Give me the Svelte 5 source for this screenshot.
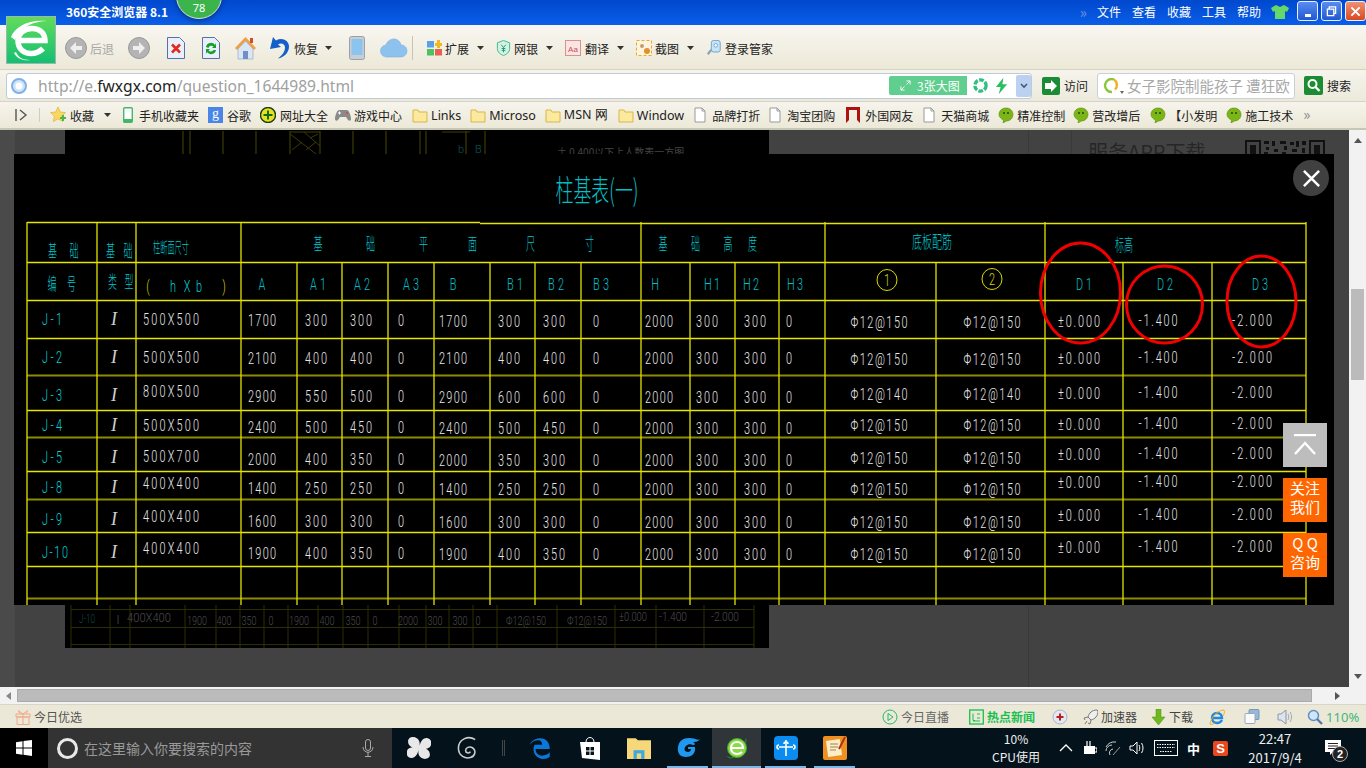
<script>
  const rows = [
    ['J-1', '500X500', [1700, 300, 300, 0], [1700, 300, 300, 0], 'Φ12@150'],
    ['J-2', '500X500', [2100, 400, 400, 0], [2100, 400, 400, 0], 'Φ12@150'],
    ['J-3', '800X500', [2900, 550, 500, 0], [2900, 600, 600, 0], 'Φ12@140'],
    ['J-4', '500X500', [2400, 500, 450, 0], [2400, 500, 450, 0], 'Φ12@150'],
    ['J-5', '500X700', [2000, 400, 350, 0], [2000, 350, 300, 0], 'Φ12@150'],
    ['J-8', '400X400', [1400, 250, 250, 0], [1400, 250, 250, 0], 'Φ12@150'],
    ['J-9', '400X400', [1600, 300, 300, 0], [1600, 300, 300, 0], 'Φ12@150'],
    ['J-10', '400X400', [1900, 400, 350, 0], [1900, 400, 350, 0], 'Φ12@150']
  ];
  // text in the drawing sits a little off the row centre, and differently per column group
  const yLabel = [319, 357, 395, 425, 457, 487, 519, 552];
  const ySize = [319, 357, 391, 425, 456, 483, 516, 548];
  const yA = [320, 358, 396, 427, 459, 488, 521, 553];
  const yB = [321, 358, 397, 428, 460, 489, 522, 554];
  const yPhi = [322, 359, 394, 425, 458, 489, 522, 554];
  const yD = [321, 358, 393, 424, 454, 482, 515, 547];

  const xA = [262, 316, 361, 401];
  const xB = [453, 509, 554, 596];
  const xH = [659, 707, 755, 789];

  // CAD lettering is narrow and loosely spaced: glyphs are squeezed, then spread out
  const squeeze = 0.64;

  const numWidth = (v) => (v === 0 ? 6 : String(v).length === 4 ? 28 : 22);

  const values = rows.flatMap((r, i) => [
    ...r[2].map((v, j) => ({ x: xA[j], y: yA[i], t: v, w: numWidth(v) })),
    ...r[3].map((v, j) => ({ x: xB[j], y: yB[i], t: v, w: numWidth(v) })),
    ...[2000, 300, 300, 0].map((v, j) => ({ x: xH[j], y: yB[i], t: v, w: numWidth(v) })),
    { x: 171, y: ySize[i], t: r[1], w: 56 },
    { x: 879, y: yPhi[i], t: r[4], w: 57 },
    { x: 992, y: yPhi[i], t: r[4], w: 57 },
    { x: 1079, y: yD[i], t: '±0.000', w: 42 },
    { x: 1158, y: yD[i] - 1, t: '-1.400', w: 39 },
    { x: 1252, y: yD[i] - 1, t: '-2.000', w: 40 }
  ]);

  const hLines = [
    [27, 480, 222.5, 1],
    [480, 1306, 223.5, 1],
    [27, 1306, 262.5, 1],
    [27, 1306, 300.5, 1],
    [27, 1306, 338.5, 1],
    [27, 1306, 375.5, 0],
    [27, 1306, 410.5, 1],
    [27, 1306, 437.5, 0],
    [27, 1306, 471.5, 1],
    [27, 1306, 499.5, 0],
    [27, 1306, 532.5, 1],
    [27, 1306, 566.5, 1],
    [27, 1306, 598.5, 0]
  ];
  const tallCols = [27, 97, 136, 241, 641, 825, 1045, 1306];
  const shortCols = [297, 342, 388, 434, 490, 535, 581, 690, 735, 779, 936, 1123, 1212];

  const heads = [
    ['基', 52.5, 250], ['础', 74, 250], ['基', 110.5, 250], ['础', 128, 250],
    ['编', 52, 283], ['号', 71.5, 283], ['类', 112.5, 281], ['型', 129, 281],
    ['基', 318, 243], ['础', 370.5, 243], ['平', 423.5, 243], ['面', 472.5, 243], ['尺', 530.5, 243], ['寸', 589.5, 243],
    ['基', 663, 243], ['础', 695.5, 243], ['高', 728, 243], ['度', 752.5, 243]
  ];
  const codes = [
    ['A', 262], ['A1', 318], ['A2', 362], ['A3', 411], ['B', 453], ['B1', 515], ['B2', 556], ['B3', 601],
    ['H', 655], ['H1', 712], ['H2', 751], ['H3', 795], ['D1', 1084], ['D2', 1165], ['D3', 1260]
  ];

  // the dimmed drawing of the page behind the lightbox
  const dimCols = [71, 110, 130, 185, 216, 240, 264, 288, 318, 343, 368, 399, 426, 449, 473, 497, 557, 615, 656, 704, 754];
  const dimTexts = [
    ['400X400', 149, 44], ['1900', 197, 20], ['400', 224, 15], ['350', 249, 15], ['0', 271, 5], ['1900', 299, 20],
    ['400', 327, 15], ['350', 353, 15], ['0', 375, 5], ['2000', 408, 20], ['300', 435, 15], ['300', 460, 15],
    ['0', 478, 5], ['Φ12@150', 526, 40], ['Φ12@150', 587, 40], ['±0.000', 633, 28], ['-1.400', 673, 28], ['-2.000', 725, 28]
  ];
  const dimTop = [183, 190, 223, 256, 290, 320, 353, 386, 420, 426, 466, 485];

  const leftBookmarks = [['Links', ''], ['Microso', 'tuck1'], ['MSN 网', 'tuck1'], ['Window', '']];
  const docBookmarks = [['品牌打折', ''], ['淘宝团购', 'tuck1']];
  const chatBookmarks = [['精准控制', 'tuck1'], ['营改增后', 'tuck2'], ['【小发明', ''], ['施工技术', 'tuck1']];
  const menu = ['文件', '查看', '收藏', '工具', '帮助'];
</script>

{#snippet caret()}
  <svg class="caret" viewBox="0 0 7 4"><path d="M0 0h7L3.500 4z" fill="#333" /></svg>
{/snippet}

{#snippet folder()}
  <svg class="ic16" viewBox="0 0 16 16"><path d="M1 3h5l1 2h8v10H1z" fill="#fbe9a0" stroke="#d9b64a" /></svg>
{/snippet}

{#snippet doc()}
  <svg class="ic12" viewBox="0 0 12 16"><path d="M1 1h7l3 3v11H1z" fill="#fff" stroke="#999" /><path d="M8 1v3h3" fill="none" stroke="#999" /></svg>
{/snippet}

{#snippet chat()}
  <svg class="ic16" viewBox="0 0 16 16"><path d="M8 1c4 0 7 2.700 7 6.500S12 14 8.500 14L5 16l.5-3C3 12 1 10 1 7.500 1 3.700 4 1 8 1z" fill="#7cb518" stroke="#5a8f10" stroke-width=".6" /><circle cx="6" cy="6" r="1" fill="#234a00" /><circle cx="10" cy="6" r="1" fill="#234a00" /></svg>
{/snippet}

{#snippet cad(t, x, y, w, cls = '')}
  <text
    transform="translate({x} {y}) scale({squeeze} 1)"
    class="cad-num {cls}"
    text-anchor="middle"
    textLength={w / squeeze}
    lengthAdjust="spacing">{t}</text>
{/snippet}

<div class="screen">
  <header class="title-bar">
    <span class="app-name">360安全浏览器 8.1</span>
    <div class="menu">
      <span class="chev">»</span>
      {#each menu as m}<span class="menu-item">{m}</span>{/each}
      <svg class="shirt" viewBox="0 0 18 16"><path d="M5 1l4 2 4-2 5 3-2 4-2-1v8H4V7L2 8 0 4z" fill="#66d86a" /></svg>
      <div class="win-buttons">
        <button class="win min" aria-label="最小化"><i></i></button>
        <button class="win max" aria-label="还原">
          <svg viewBox="0 0 12 12"><path d="M3.500 3V1h7v7H8.500M1.500 3.500h7v7h-7z" fill="none" stroke="#fff" stroke-width="1.400" /></svg>
        </button>
        <button class="win close" aria-label="关闭">
          <svg viewBox="0 0 12 12"><path d="M1.500 1.500l9 9m0-9l-9 9" stroke="#fff" stroke-width="2.200" /></svg>
        </button>
      </div>
    </div>
  </header>

  <!-- logo and score badge hang over the title bar -->
  <div class="badge">78</div>
  <svg class="logo" viewBox="0 0 50 48">
    <defs>
      <linearGradient id="lg" x1="0" y1="0" x2="0" y2="1"><stop offset="0" stop-color="#62dc5c" /><stop offset="1" stop-color="#12bf72" /></linearGradient>
    </defs>
    <rect x=".5" y=".5" width="49" height="47" fill="url(#lg)" stroke="#9cb6b0" />
    <path d="M13 24.500h26c0-8-6-12-13-12-8 0-14 5-14 12.500 0 8 6 12.500 13 12.500 5 0 9-2 12-5" fill="none" stroke="#fff" stroke-width="5.500" />
    <path d="M5 21C9 10 24 3 41 5 28 5 14 11 9 24zM10 36c2 5 6 8 14 8-6 1-13-1-16-7z" fill="#fff" />
  </svg>

  <div class="toolbar">
    <svg class="round" viewBox="0 0 22 22"><circle cx="11" cy="11" r="10.500" fill="#b4b4b4" stroke="#999" /><path d="M11 5l-6 6 6 6v-4h6V9h-6z" fill="#eee" /></svg>
    <span class="dim-label">后退</span>
    <svg class="round fwd" viewBox="0 0 22 22"><circle cx="11" cy="11" r="10.500" fill="#b4b4b4" stroke="#999" /><path d="M11 5l6 6-6 6v-4H5V9h6z" fill="#eee" /></svg>
    <svg class="page-ic stop" viewBox="0 0 18 22"><path d="M.5.500h12l5 5v16H.5z" fill="#e8f0fb" stroke="#5a6ea8" /><path d="M5 7.500l8 8m0-8l-8 8" stroke="#e02a1a" stroke-width="2.600" /></svg>
    <svg class="page-ic reload" viewBox="0 0 18 22"><path d="M.5.500h12l5 5v16H.5z" fill="#e8f0fb" stroke="#5a6ea8" /><path d="M4 10a5 5 0 0 1 9-2l1-2v5h-4l1.500-1.500A3 3 0 0 0 6.500 11zM14 13a5 5 0 0 1-9 2l-1 2v-5h4l-1.500 1.500a3 3 0 0 0 5 -.5z" fill="#16a028" /></svg>
    <svg class="home" viewBox="0 0 23 24"><path d="M11.500 1L1 12l2 2 8.500-9 8.500 9 2-2z" fill="#f0a040" /><path d="M4 13l7.500-8L19 13v10H4z" fill="#dbe6f5" stroke="#8aa0c0" stroke-width=".6" /><rect x="9" y="15" width="5" height="8" fill="#6f8fc8" /><rect x="16" y="2" width="3" height="5" fill="#c85030" /></svg>
    <svg class="undo" viewBox="0 0 21 24"><path d="M4 1L1 13l11-2-3-2.500c3-2 7-.5 7 3 0 4-3 8-7 11 6-1 11-6 11-12 0-6-7-9.500-13-6z" fill="#1560c8" /></svg>
    <span class="label">恢复</span>
    <span class="caret-gap">{@render caret()}</span>
    <svg class="phone" viewBox="0 0 16 24"><rect x=".5" y=".5" width="15" height="23" rx="2" fill="#c8ccd4" stroke="#9aa0ac" /><rect x="2.500" y="3" width="11" height="16" fill="#8cc4f0" /></svg>
    <svg class="cloud" viewBox="0 0 28 20"><path d="M7 19a6 6 0 0 1-1-12c1-4 5-6.500 9-6 3 .5 5.500 3 6 6 3.500 0 6 2.500 6 6s-3 6-6 6z" fill="#8ec2ee" stroke="#7ab0de" stroke-width=".6" /></svg>
    <span class="sep"></span>
    <div class="group first">
      <svg class="ic15" viewBox="0 0 15 16"><rect y="1" width="7" height="6.500" fill="#5aa0e8" /><rect y="9" width="7" height="6.500" fill="#50c060" /><rect x="8" y="9" width="7" height="6.500" fill="#e86050" /><path d="M10 0h3v3h2v3h-2v2h-3V6H8V3h2z" fill="#f2b820" /></svg>
      <span class="label">扩展</span>{@render caret()}
    </div>
    <div class="group">
      <svg class="ic15" viewBox="0 0 15 17"><path d="M7.500.500L14 3v6c0 4-3 6-6.500 7.500C4 15 1 13 1 9V3z" fill="#d4f2e4" stroke="#38b888" /><path d="M5 5l2.500 3L10 5M7.500 8v5M5.500 9h4M5.500 11h4" fill="none" stroke="#1c9868" /></svg>
      <span class="label">网银</span>{@render caret()}
    </div>
    <div class="group">
      <svg class="ic16" viewBox="0 0 16 16"><rect x=".5" y=".5" width="15" height="15" fill="#fbe4e4" stroke="#d89090" /><text x="8" y="11.500" class="aa">Aa</text></svg>
      <span class="label wide">翻译</span>{@render caret()}
    </div>
    <div class="group">
      <svg class="ic16" viewBox="0 0 16 16"><rect x=".5" y=".5" width="15" height="15" fill="#fdf5e0" stroke="#eda820" stroke-dasharray="3 2" /><circle cx="6" cy="6" r="2" fill="#c0a070" /><circle cx="11" cy="11" r="3" fill="#e09030" /></svg>
      <span class="label">截图</span>{@render caret()}
    </div>
    <div class="group">
      <svg class="ic16" viewBox="0 0 16 18"><rect x="5" y=".5" width="10" height="13" rx="2.500" fill="#c6e4f8" stroke="#6a9ec8" /><circle cx="10" cy="6" r="2" fill="#fff" stroke="#6a9ec8" /><path d="M5 11l-4 5" stroke="#8aa4b8" stroke-width="2.500" /></svg>
      <span class="label">登录管家</span>
    </div>
  </div>

  <div class="address-bar">
    <div class="url-box">
      <svg class="ic16" viewBox="0 0 16 16"><circle cx="8" cy="8" r="7" fill="#cfe4fa" stroke="#7fb0e8" stroke-width="2" /><circle cx="8" cy="8" r="3.500" fill="#fff" /></svg>
      <span class="url">http://e.<b>fwxgx.com</b>/question_1644989.html</span>
      <span class="big-pic">
        <svg viewBox="0 0 12 12"><path d="M7 1h4v4M11 1L7 5M5 11H1V7M1 11l4-4" fill="none" stroke="#fff" /></svg>
        3张大图
      </span>
      <svg class="shutter" viewBox="0 0 16 16"><circle cx="8" cy="8" r="6" fill="none" stroke="#2fc080" stroke-width="3.600" stroke-dasharray="5 1.500" /></svg>
      <svg class="bolt" viewBox="0 0 14 18"><path d="M9 0L1 10h5l-2 8 9-11H8z" fill="#26c060" /></svg>
      <span class="drop"><svg viewBox="0 0 8 6"><path d="M1 1l3 3 3-3" fill="none" stroke="#3c5a88" stroke-width="1.600" /></svg></span>
    </div>
    <svg class="go" viewBox="0 0 18 18"><rect width="18" height="18" rx="2" fill="#1c8c34" /><path d="M9 3l6 6-6 6v-3H3V6h6z" fill="#fff" /></svg>
    <span class="label go-text">访问</span>
    <div class="search-box">
      <svg class="q" viewBox="0 0 22 16"><path d="M9 14a6.500 6.500 0 1 1 2-12.500" fill="none" stroke="#8cc63f" stroke-width="2.400" /><path d="M11 1.500a6.500 6.500 0 0 1 1 10" fill="none" stroke="#f0b020" stroke-width="2.400" /><path d="M17 13h4l-2 3z" fill="#666" /></svg>
      <span>女子影院制能孩子 遭狂欧</span>
    </div>
    <svg class="go find" viewBox="0 0 19 19"><rect width="19" height="19" rx="2" fill="#1c8c34" /><circle cx="8.500" cy="8" r="4" fill="none" stroke="#fff" stroke-width="2" /><path d="M11.500 11l4 4" stroke="#fff" stroke-width="2.400" /></svg>
    <span class="label go-text">搜索</span>
  </div>

  <nav class="bookmarks">
    <svg class="toggle" viewBox="0 0 14 12" aria-hidden="true"><path d="M1 0v12" stroke="#555" stroke-width="1.400" /><path d="M5 1l6 5-6 5" fill="none" stroke="#555" stroke-width="1.400" /></svg>
    <span class="bm-sep"></span>
    <div class="bm">
      <svg class="ic16" viewBox="0 0 16 16"><path d="M8 0l2.300 5 5.200.6-3.900 3.500 1.100 5.400L8 11.800 3.300 14.500l1.100-5.400L.5 5.600 5.700 5z" fill="#f8d860" stroke="#d8a830" stroke-width=".6" /><path d="M10 10h2V8h2v2h2v2h-2v2h-2v-2h-2z" fill="#48b848" /></svg>
      <span>收藏</span>
    </div>
    <span class="bm-caret">{@render caret()}</span>
    <div class="bm roomy">
      <svg class="ic10" viewBox="0 0 10 16"><rect x=".7" y=".7" width="8.600" height="14.600" rx="1" fill="#fff" stroke="#40b868" stroke-width="1.400" /><rect x="1" y="12" width="8" height="3" fill="#40b868" /></svg>
      <span>手机收藏夹</span>
    </div>
    <div class="bm tuck1">
      <span class="g">g</span>
      <span>谷歌</span>
    </div>
    <div class="bm tuck1">
      <svg class="ic16" viewBox="0 0 16 16"><circle cx="8" cy="8" r="7.500" fill="#e8e020" stroke="#184018" stroke-width="1.400" /><path d="M7 3.500h2V7h3.500v2H9v3.500H7V9H3.500V7H7z" fill="#146a18" /></svg>
      <span>网址大全</span>
    </div>
    <div class="bm snug tuck3">
      <svg class="ic16" viewBox="0 0 16 12"><path d="M4 1h8c2 0 4 6 4 9 0 2-2 2-3 1l-2-3H5l-2 3c-1 1-3 1-3-1 0-3 2-9 4-9z" fill="#8a8a8a" /><circle cx="12" cy="4" r="1" fill="#e04040" /><path d="M3 4h3M4.500 2.500v3" stroke="#fff" /></svg>
      <span>游戏中心</span>
    </div>
    {#each leftBookmarks as [name, tuck]}
      <div class="bm snug {tuck}">{@render folder()}<span class="tight">{name}</span></div>
    {/each}
    {#each docBookmarks as [name, tuck]}
      <div class="bm roomy {tuck}">{@render doc()}<span>{name}</span></div>
    {/each}
    <div class="bm loose">
      <svg class="ic14" viewBox="0 0 14 16"><path d="M0 0h14v16l-3-3V3H3v10l-3 3z" fill="#b01010" /></svg>
      <span>外国网友</span>
    </div>
    <div class="bm roomy">{@render doc()}<span>天猫商城</span></div>
    {#each chatBookmarks as [name, tuck]}
      <div class="bm snug {tuck}">{@render chat()}<span>{name}</span></div>
    {/each}
    <span class="chev-more">»</span>
  </nav>

  <div class="content">
    <main class="page">
      <!-- page behind the dark overlay, dimmed drawing and side panel -->
      <svg class="backdrop" viewBox="0 130 1349 557">
        <rect x="0" y="130" width="15" height="557" fill="#4a4a4a" />
        <rect x="65" y="130" width="704" height="518" fill="#000" />
        {#each dimTop as x}
          <line x1={x} y1="131" x2={x} y2="154" stroke="#3c3c00" stroke-width="1.200" />
        {/each}
        <path d="M290 132h30M290 134l26 20M304 132l16 14M292 150l10-8M306 150l10-8M310 138l8-4" fill="none" stroke="#3c3c00" />
        <path d="M442 132h28" stroke="#3c3c00" />
        <text x="458" y="153" class="dim-top-code">b</text>
        <text x="475" y="153" class="dim-top-code">B</text>
        <text x="557" y="156" class="dim-note">± 0.400以下上人数表一方图</text>
        {#each dimCols as x}
          <line x1={x} y1="605" x2={x} y2="648" stroke="#2e2e00" />
        {/each}
        {#each [609.500, 627.500, 644.500] as y}
          <line x1="71" y1={y} x2="754" y2={y} stroke="#2e2e00" />
        {/each}
        <text x="87" y="623" class="dim-cad cyan" text-anchor="middle" textLength="16" lengthAdjust="spacingAndGlyphs">J-10</text>
        <text x="118" y="624" class="dim-cad" text-anchor="middle">I</text>
        {#each dimTexts as [t, x, w], i}
          <text {x} y={i < 1 ? 622 : i > 14 ? 621 : 625} class="dim-cad" text-anchor="middle" textLength={w} lengthAdjust="spacingAndGlyphs">{t}</text>
        {/each}
        <line x1="1028.500" y1="130" x2="1028.500" y2="687" stroke="#3a3a3a" />
        <line x1="1071.500" y1="130" x2="1071.500" y2="154" stroke="#3a3a3a" />
        <text x="1088" y="160" class="panel-title">服务APP下载</text>
        <g fill="none" stroke="#111" stroke-width="2">
          <rect x="1246" y="141" width="14" height="20" />
          <rect x="1310" y="141" width="14" height="20" />
        </g>
        <path d="M1250 145h6v10h-6zM1314 145h6v10h-6zM1264 141h5v3h-5zM1272 141h3v5h-3zM1266 147h3v3h-3zM1274 149h4v3h-4zM1280 141h6v3h-6zM1284 146h3v4h-3zM1290 142h4v3h-4zM1296 141h3v6h-3zM1292 149h5v3h-5zM1302 141h4v4h-4zM1302 148h3v5h-3zM1264 152h4v3h-4zM1282 152h4v3h-4z" fill="#111" />
      </svg>

      <section class="lightbox">
        <svg class="drawing" viewBox="14 154 1320 451">
          <text x="597" y="201" class="cad-title" text-anchor="middle" textLength="83" lengthAdjust="spacingAndGlyphs">柱基表(一)</text>

          {#each hLines as [x1, x2, y, bright]}
            <line {x1} {x2} y1={y} y2={y} class={bright ? 'line' : 'line faint'} />
          {/each}
          {#each tallCols as x}
            <line x1={x} x2={x} y1="222" y2="605" class="line" />
          {/each}
          {#each shortCols as x}
            <line x1={x} x2={x} y1="262" y2="605" class="line" />
          {/each}

          {#each heads as [t, x, y]}
            <text {x} y={y + 7} class="cad-cn" text-anchor="middle" textLength="9" lengthAdjust="spacingAndGlyphs">{t}</text>
          {/each}
          <text x="171" y="253" class="cad-cn small" text-anchor="middle" textLength="36" lengthAdjust="spacingAndGlyphs">柱断面尺寸</text>
          <text x="932" y="248" class="cad-cn" text-anchor="middle" textLength="40" lengthAdjust="spacingAndGlyphs">底板配筋</text>
          <text x="1124" y="251" class="cad-cn" text-anchor="middle" textLength="18" lengthAdjust="spacingAndGlyphs">标高</text>

          {@render cad('(', 148, 292, 4, 'yellow')}
          {@render cad('h', 173, 292, 7, 'cyan')}
          {@render cad('X', 187, 292, 7, 'cyan')}
          {@render cad('b', 199, 292, 7, 'cyan')}
          {@render cad(')', 224, 292, 4, 'yellow')}

          {#each codes as [t, x]}
            {@render cad(t, x, 290, t.length * 8, 'code')}
          {/each}

          <ellipse cx="887" cy="280" rx="10" ry="10.500" class="ring" />
          {@render cad('1', 887, 286, 5, 'yellow')}
          <ellipse cx="992" cy="279" rx="10" ry="10.500" class="ring" />
          {@render cad('2', 992, 285, 6, 'yellow')}

          {#each rows as r, i}
            {@render cad(r[0], r[0].length > 3 ? 55 : 52, yLabel[i] + 6, r[0].length > 3 ? 26 : 20, 'cyan')}
            <text x="114" y={yLabel[i] + 6} class="cad-i" text-anchor="middle">I</text>
          {/each}
          {#each values as v}
            {@render cad(v.t, v.x, v.y + 6, v.w)}
          {/each}

          <ellipse cx="1080.500" cy="293" rx="40" ry="50" class="mark" />
          <ellipse cx="1164.500" cy="304.500" rx="38" ry="38.500" class="mark" />
          <ellipse cx="1261.500" cy="301.500" rx="34.500" ry="45.500" class="mark" />
        </svg>

        <button class="lb-close" aria-label="关闭">
          <svg viewBox="0 0 20 20"><path d="M2 2l16 16m0-16L2 18" stroke="#fff" stroke-width="2.600" /></svg>
        </button>
      </section>

      <aside class="side">
        <button class="to-top" aria-label="回到顶部">
          <svg viewBox="0 0 24 22"><path d="M1 1h22" stroke="#fff" stroke-width="2.400" /><path d="M2 20L12 9l10 11" fill="none" stroke="#fff" stroke-width="2.400" /></svg>
        </button>
        <button class="side-btn">关注<br />我们</button>
        <button class="side-btn">Q Q<br />咨询</button>
      </aside>
    </main>

    <div class="vscroll">
      <svg class="arrow" viewBox="0 0 8 5"><path d="M4 0l4 5H0z" fill="#555" /></svg>
      <div class="v-track"><div class="v-thumb"></div></div>
      <svg class="arrow" viewBox="0 0 8 5"><path d="M4 5L0 0h8z" fill="#555" /></svg>
    </div>
  </div>

  <div class="hscroll">
    <svg class="h-arrow" viewBox="0 0 5 8"><path d="M0 4l5-4v8z" fill="#888" /></svg>
    <div class="h-thumb"></div>
    <svg class="h-arrow right" viewBox="0 0 5 8"><path d="M5 4L0 0v8z" fill="#555" /></svg>
  </div>

  <footer class="status-bar">
    <svg class="gift" viewBox="0 0 16 16"><path d="M1 5h14v3H1zM2 8h12v7.500H2zM8 5v10.500M5 5L3.500 1.500 8 5l4.500-3.500L11 5" fill="none" stroke="#f0a888" /></svg>
    <span class="today">今日优选</span>
    <div class="status-right">
      <svg class="ic16" viewBox="0 0 16 16"><circle cx="8" cy="8" r="7" fill="none" stroke="#28b868" /><path d="M6 4.500L11 8l-5 3.500z" fill="none" stroke="#28b868" /></svg>
      <span class="st-live">今日直播</span>
      <svg class="ic15 st-news-ic" viewBox="0 0 15 16"><rect x=".7" y="1" width="13.600" height="14" fill="none" stroke="#18c050" stroke-width="1.300" /><path d="M4 4.500v7h2M8 5h3M8 9h3M4 12h7" fill="none" stroke="#18c050" /></svg>
      <span class="st-news">热点新闻</span>
      <svg class="ic16 st-med" viewBox="0 0 16 16"><circle cx="8" cy="8" r="7" fill="#e4e8f0" stroke="#a8b4c8" /><path d="M7 4.500h2V7h2.500v2H9v2.500H7V9H4.500V7H7z" fill="#b82020" /></svg>
      <svg class="ic15 st-rocket" viewBox="0 0 15 16"><path d="M14 1c-5 0-8 3-9 7l3 3c4-1 7-4 7-9zM5 8L1 9l1 2M8 11l-1 4-2-1M4 12l-2 3" fill="#eee" stroke="#777" /></svg>
      <span class="st-speed">加速器</span>
      <svg class="ic15 st-down" viewBox="0 0 15 16"><path d="M5 0h5v8h4l-6.500 8L1 8h4z" fill="#70b820" stroke="#4e8c10" stroke-width=".5" /></svg>
      <span class="st-dl">下载</span>
      <svg class="ic16 st-ie" viewBox="0 0 16 16"><path d="M3 9h10c0-3-2-5-5-5S3 6 3 9s2 5 5 5c2 0 4-1 5-3" fill="none" stroke="#2088e0" stroke-width="2.400" /><path d="M1 15C2 8 9 1 15 1c1 2 0 4-1 6M1 15c1 1 3 0 5-1" fill="none" stroke="#f0b020" /></svg>
      <svg class="ic16 st-win" viewBox="0 0 16 16"><rect x="5" y=".5" width="10" height="10" rx="1" fill="#98b8d8" stroke="#7898b8" /><rect x="1" y="4.500" width="10" height="10" rx="1" fill="#fafafa" stroke="#98a8b8" /></svg>
      <svg class="ic16 st-vol" viewBox="0 0 16 16"><path d="M1 5h3l5-4v14l-5-4H1z" fill="#dde4ec" stroke="#8a98a8" /><path d="M11 5c1 2 1 4 0 6M13 3c2 3 2 7 0 10" fill="none" stroke="#98a8b8" /></svg>
      <svg class="ic16 st-zoom" viewBox="0 0 16 16"><circle cx="6.500" cy="6.500" r="5" fill="#d0e6fa" stroke="#5f90c8" stroke-width="1.500" /><path d="M10 10l5 5" stroke="#5878a8" stroke-width="2.400" /></svg>
      <span class="st-pct">110%</span>
    </div>
  </footer>

  <div class="taskbar">
    <div class="start">
      <svg viewBox="0 0 16 16"><path d="M0 2.300l6.500-1V7.500H0zM7.500 1.100L16 0v7.500H7.500zM0 8.500h6.500v6.200l-6.500-1zM7.500 8.500H16V16l-8.500-1.200z" fill="#fff" /></svg>
    </div>
    <div class="cortana">
      <span class="ring-o"></span>
      <span class="placeholder">在这里输入你要搜索的内容</span>
      <svg class="mic" viewBox="0 0 12 18"><rect x="3.500" y=".5" width="5" height="11" rx="2.500" fill="none" stroke="#aaa" /><path d="M1 8c0 7 10 7 10 0M6 13v4M3 17.500h6" fill="none" stroke="#aaa" /></svg>
    </div>
    <div class="apps">
      <div class="app">
        <svg viewBox="0 0 22 22"><path d="M11 11C5 12 1 9 1 5s5-5 8-3 3 5 2 9zM11 11c1-6 4-10 8-9s4 6 2 8-6 2-10 1zM11 11c6-1 10 2 10 6s-5 5-8 3-3-5-2-9zM11 11c-1 6-4 10-8 9s-4-6-2-8 6-2 10-1z" fill="#e8e8e8" /></svg>
      </div>
      <div class="app">
        <svg viewBox="0 0 20 20"><path d="M16 3C10-1 2 3 2 10s6 9 10 8 5-6 2-8-6 0-6 2 3 3 4 1" fill="none" stroke="#ccc" stroke-width="1.300" /></svg>
      </div>
      <span class="task-sep"></span>
      <div class="app">
        <svg viewBox="0 0 22 22"><path d="M2 12h17c0-6-3-10-9-10C5 2 1 6 1 8c2-3 5-4 7-4 3 0 4 2 4 4H5c-3 7 2 13 8 13 3 0 5-1 6-2v-4c-2 2-4 3-7 3-4 0-6-3-6-6z" fill="#0a78d8" /></svg>
      </div>
      <div class="app">
        <svg viewBox="0 0 20 24"><path d="M6 6c0-6 8-6 8 0" fill="none" stroke="#fff" /><path d="M0 6l20 0v18l-18-2z" fill="#fff" /><path d="M6 11h3.500v3.500H6zM10.500 11H14v3.500h-3.500zM6 15.500h3.500V19H6zM10.500 15.500H14V19h-3.500z" fill="#04141c" /></svg>
      </div>
      <div class="app">
        <svg viewBox="0 0 22 20"><path d="M0 1h8l2 2h12v17H0z" fill="#f6d87a" /><rect x="6" y="12" width="10" height="8" fill="#40a8e0" /><rect x="9" y="15" width="4" height="5" fill="#f6d87a" /></svg>
      </div>
      <div class="app on">
        <svg viewBox="0 0 24 22"><path d="M13 1c6 0 9 3 11 1-2 3-5 3-7 3 3 2 2 3 0 3-2-1-5-1-7 1-3 3-1 6 2 6 2 0 3-2 3-3h-3v-2h7c1 6-3 10-9 10S1 16 2 10 7 1 13 1z" fill="#2098f0" /></svg>
      </div>
      <div class="app active">
        <svg viewBox="0 0 24 24"><circle cx="12" cy="12" r="9.500" fill="#8cd848" stroke="#3caa30" /><path d="M6 12h12c0-4-3-6-6-6s-6 2-6 6 3 6 6 6c2 0 4-1 5-2" fill="none" stroke="#fff" stroke-width="2.200" /><path d="M3 20c-1 1 3 3 5 1M20 3c2 0 1 3 0 4" fill="none" stroke="#2a9a30" /></svg>
      </div>
      <div class="app on">
        <svg viewBox="0 0 24 24"><rect width="24" height="24" rx="4" fill="#0a8cf0" /><path d="M12 4v16M5 11h14M10 8a2 2 0 0 1 4 0M5 9a2 2 0 0 0 0 4M19 9a2 2 0 0 1 0 4" fill="none" stroke="#fff" stroke-width="1.600" /></svg>
      </div>
      <div class="app on">
        <svg viewBox="0 0 24 24"><rect width="24" height="24" rx="2" fill="#f09020" /><rect x="4" y="4" width="14" height="16" fill="#fbeec8" transform="rotate(-8 11 12)" /><path d="M7 8h8M7 11h8M7 14h6" stroke="#a08050" /><path d="M22 1l-6 12" stroke="#b03010" stroke-width="2" /></svg>
      </div>
    </div>
    <div class="tray">
      <div class="cpu"><span>10%</span><span>CPU使用</span></div>
      <svg class="t-up" viewBox="0 0 14 8"><path d="M1 7l6-6 6 6" fill="none" stroke="#fff" stroke-width="1.300" /></svg>
      <svg class="t-ic" viewBox="0 0 16 14"><rect x="3" y="5" width="11" height="8" fill="#fff" /><path d="M6 0v5M9 0v5M14 7h2v4h-2" stroke="#fff" stroke-width="1.200" /></svg>
      <svg class="t-ic" viewBox="0 0 16 16"><path d="M1 11a6 6 0 0 1 6-6M1 7a10 10 0 0 1 10-5M5 15a4 4 0 0 1 3-6" fill="none" stroke="#ccc" /><path d="M8 15l7-8" stroke="#999" /></svg>
      <svg class="t-ic" viewBox="0 0 16 16"><path d="M1 6h3l4-4v12l-4-4H1z" fill="none" stroke="#fff" /><path d="M10 5c1 2 1 4 0 6M12.500 3c2 3 2 7 0 10" fill="none" stroke="#fff" /></svg>
      <svg class="t-kb" viewBox="0 0 24 16"><rect x=".5" y=".5" width="23" height="15" fill="none" stroke="#fff" /><path d="M3 4.500h18M3 7.500h18M6 11.500h12" stroke="#fff" stroke-dasharray="1.500 1" /></svg>
      <span class="t-lang">中</span>
      <span class="sogou">S</span>
      <div class="clock"><span class="time">22:47</span><span>2017/9/4</span></div>
      <div class="notify">
        <svg viewBox="0 0 16 16"><path d="M0 0h16v12H8l-3 3v-3H0z" fill="#fff" /><path d="M3 3.500h10M3 6h10M3 8.500h10" stroke="#222" /></svg>
        <span class="count">2</span>
      </div>
    </div>
  </div>
</div>

<style>
  :global(body) {
    margin: 0;
    background: #000;
  }

  button {
    border: 0;
    padding: 0;
    margin: 0;
    font: inherit;
    color: inherit;
  }

  .screen {
    position: relative;
    width: 1366px;
    height: 768px;
    overflow: hidden;
    display: flex;
    flex-direction: column;
    font-family: "Noto Sans CJK SC", "Noto Sans", sans-serif;
    font-size: 12px;
    color: #222;
  }

  .ic10 { width: 10px; height: 16px; }
  .ic12 { width: 12px; height: 16px; }
  .ic14 { width: 14px; height: 16px; }
  .ic15 { width: 15px; height: 16px; flex: none; }
  .ic16 { width: 16px; height: 16px; flex: none; }
  .caret { width: 7px; height: 4px; flex: none; }
  .label { white-space: nowrap; color: #222; }

  /* title bar */
  .title-bar {
    height: 25px;
    flex: none;
    display: flex;
    align-items: center;
    justify-content: space-between;
    padding-left: 66px;
    background: linear-gradient(#0048ce, #0a5ee8);
    color: #fff;
  }

  .app-name {
    font-weight: 700;
    font-size: 12px;
    margin-top: -2px;
  }

  .menu {
    display: flex;
    align-items: center;
    gap: 11px;
    height: 100%;
  }

  .menu-item { margin-top: -2px; }

  .chev {
    color: #6d94d8;
    font-size: 15px;
    margin: -3px -1px 0 0;
  }

  .shirt {
    width: 18px;
    height: 16px;
    margin: -2px 0 0 -1px;
  }

  .win-buttons {
    display: flex;
    gap: 3px;
    margin-left: -3px;
    align-self: flex-start;
    margin-top: 1px;
  }

  .win {
    position: relative;
    width: 21px;
    height: 20px;
    border: 1px solid #e8f0ff;
    border-radius: 3px;
    background: linear-gradient(#5a8cf0, #2058d0);
    display: flex;
    align-items: center;
    justify-content: center;
    box-sizing: border-box;
  }

  .win i {
    width: 6px;
    height: 3px;
    background: #fff;
    margin-top: 8px;
  }

  .win svg {
    width: 11px;
    height: 11px;
  }

  .win.close {
    background: linear-gradient(#f09070, #d84a20);
  }

  .badge {
    position: absolute;
    left: 176px;
    top: -27px;
    width: 44px;
    height: 39px;
    padding-bottom: 5px;
    border-radius: 50%;
    border: 1px solid #ddd;
    background: #3cb44c;
    box-shadow: 0 2px 5px rgba(0, 0, 0, 0.35);
    color: #fff;
    font: 11px/11px "Noto Sans", sans-serif;
    display: flex;
    align-items: flex-end;
    justify-content: center;
  }

  .logo {
    position: absolute;
    left: 6px;
    top: 16px;
    width: 50px;
    height: 48px;
  }

  /* main toolbar */
  .toolbar {
    height: 45px;
    flex: none;
    box-sizing: border-box;
    display: flex;
    align-items: center;
    padding: 2px 0 0 65px;
    background: linear-gradient(#f8f6f0, #ece9d8);
    border-bottom: 1px solid #d6d2c0;
  }

  .round { width: 22px; height: 22px; flex: none; }
  .fwd { margin-left: 14px; }
  .dim-label { color: #a8a8a8; margin-left: 3px; width: 24px; }
  .page-ic { width: 18px; height: 22px; flex: none; }
  .stop { margin-left: 17px; }
  .reload { margin-left: 17px; }
  .home { width: 23px; height: 24px; margin-left: 14px; }
  .undo { width: 21px; height: 24px; margin: 0 4px 0 12px; }
  .caret-gap { margin-left: 7px; display: flex; }
  .phone { width: 16px; height: 24px; margin-left: 17px; }
  .cloud { width: 28px; height: 20px; margin-left: 15px; }
  .sep { width: 1px; height: 24px; background: #c8c4b0; margin-left: 4px; }

  .group {
    display: flex;
    align-items: center;
    gap: 3px;
    margin-left: 12px;
  }

  .group .caret { margin-left: 5px; }
  .group .wide { margin-left: 1px; }
  .group.first { margin-left: 14px; }

  .aa {
    font: 8px "Liberation Sans", sans-serif;
    fill: #c85050;
    text-anchor: middle;
  }

  /* address row */
  .address-bar {
    height: 32px;
    flex: none;
    box-sizing: border-box;
    display: flex;
    align-items: center;
    padding-left: 6px;
    background: linear-gradient(#f6f4ec, #ece9dc);
    border-bottom: 1px solid #d8d4c4;
  }

  .url-box {
    width: 1026px;
    height: 26px;
    box-sizing: border-box;
    background: #fff;
    border: 1px solid #bcccd8;
    border-radius: 3px;
    display: flex;
    align-items: center;
    padding-left: 4px;
    flex: none;
  }

  .url {
    font: 15.600px "Noto Sans", sans-serif;
    color: #a0a0a0;
    margin-left: 11px;
    width: 851px;
    white-space: nowrap;
  }

  .url b {
    font-weight: 400;
    color: #222;
  }

  .big-pic {
    width: 78px;
    height: 19px;
    background: #5fce8e;
    color: #fff;
    display: flex;
    align-items: center;
    gap: 6px;
    padding-left: 11px;
    box-sizing: border-box;
    border-radius: 2px 0 0 2px;
    white-space: nowrap;
  }

  .big-pic svg { width: 11px; height: 11px; }
  .shutter { width: 15px; height: 15px; margin-left: 6px; }
  .bolt { width: 13px; height: 18px; margin-left: 7px; }

  .drop {
    width: 15px;
    height: 22px;
    margin-left: 8px;
    background: #bcd0f0;
    border-radius: 2px;
    display: flex;
    align-items: center;
    justify-content: center;
  }

  .drop svg { width: 8px; height: 6px; }
  .go { width: 18px; height: 18px; margin-left: 10px; flex: none; }
  .go-text { margin-left: 4px; }

  .search-box {
    width: 198px;
    height: 26px;
    margin-left: 9px;
    box-sizing: border-box;
    background: #fff;
    border: 1px solid #c8d0d8;
    border-radius: 3px;
    display: flex;
    align-items: center;
    padding-left: 5px;
    font-size: 14.500px;
    color: #a8a8a8;
    white-space: nowrap;
    overflow: hidden;
    flex: none;
  }

  .q { width: 22px; height: 16px; margin-right: 2px; flex: none; }
  .find { width: 19px; height: 19px; margin-left: 9px; }

  /* favourites row */
  .bookmarks {
    height: 28px;
    flex: none;
    box-sizing: border-box;
    display: flex;
    align-items: center;
    gap: 10px;
    padding-left: 15px;
    background: linear-gradient(#f6f4ec, #ece9d8);
    border-bottom: 2px solid #c8c6b6;
    white-space: nowrap;
  }

  .toggle { width: 14px; height: 12px; flex: none; }
  .bm-sep { width: 1px; height: 14px; background: #ccc; }
  .bm { display: flex; align-items: center; gap: 4px; }
  .bm.roomy { gap: 6px; }
  .bm.snug { gap: 3px; }
  .bm.loose { gap: 5px; margin-left: 1px; }
  .tuck1 { margin-left: -1px; }
  .tuck2 { margin-left: -2px; }
  .tuck3 { margin-left: -3px; }
  .bm-caret { display: flex; margin-right: 2px; }
  .tight { font: 12.500px "Noto Sans", sans-serif; }
  .chev-more { color: #8a8a8a; font-size: 15px; margin-top: -3px; }

  .g {
    width: 15px;
    height: 16px;
    background: #4a86e8;
    color: #fff;
    text-align: center;
    font: 14px/14px "Liberation Serif", serif;
  }

  /* page with the lightbox */
  .content {
    height: 557px;
    flex: none;
    display: flex;
  }

  .page {
    position: relative;
    flex: 1;
    background: #424242;
    overflow: hidden;
  }

  .backdrop {
    display: block;
    width: 1349px;
    height: 557px;
  }

  .dim-cad {
    font: 300 13px Roboto, sans-serif;
    fill: #4c4c4c;
  }

  .dim-cad.cyan { fill: #0a4a4c; }

  .dim-top-code {
    font: 300 11px Roboto, sans-serif;
    fill: #0a5a5c;
  }

  .dim-note {
    font-size: 10px;
    fill: #444;
  }

  .panel-title {
    font-size: 20px;
    fill: #262626;
  }

  .lightbox {
    position: absolute;
    left: 14px;
    top: 24px;
    width: 1320px;
    height: 451px;
    background: #000;
  }

  .drawing {
    display: block;
    width: 1320px;
    height: 451px;
  }

  .line {
    stroke: #e4e400;
    stroke-width: 1.300;
  }

  .line.faint {
    stroke: #8c8c00;
    stroke-width: 2.200;
  }

  .cad-title {
    font-size: 30px;
    font-weight: 300;
    fill: #00c0c8;
  }

  .cad-cn {
    font-size: 17px;
    font-weight: 300;
    fill: #00c8d0;
  }

  .cad-cn.small { font-size: 15px; }

  .cad-num {
    font: 300 17px Roboto, sans-serif;
    fill: #e8e8e8;
  }

  .cad-num.cyan { fill: #00d0d8; }
  .cad-num.code { fill: #00c0cc; }
  .cad-num.yellow { fill: #d8d800; }

  .cad-i {
    font: italic 18px "Liberation Serif", serif;
    fill: #d0d0d0;
  }

  .ring {
    fill: none;
    stroke: #d8d800;
    stroke-width: 1;
  }

  .mark {
    fill: none;
    stroke: #f00000;
    stroke-width: 3;
  }

  .lb-close {
    position: absolute;
    left: 1279px;
    top: 6px;
    width: 36px;
    height: 36px;
    border-radius: 50%;
    background: #404040;
    display: flex;
    align-items: center;
    justify-content: center;
  }

  .lb-close svg { width: 19px; height: 19px; }

  .side {
    position: absolute;
    left: 1283px;
    top: 293px;
    width: 44px;
    display: flex;
    flex-direction: column;
    gap: 11px;
  }

  .to-top {
    height: 44px;
    background: #bdbdbd;
    display: flex;
    align-items: center;
    justify-content: center;
  }

  .to-top svg { width: 24px; height: 22px; }

  .side-btn {
    height: 44px;
    background: #ff6600;
    color: #fff;
    font-size: 15px;
    line-height: 19px;
    padding-bottom: 7px;
  }

  .vscroll {
    width: 17px;
    display: flex;
    flex-direction: column;
    align-items: center;
    background: #f2f2f2;
    box-sizing: border-box;
    padding: 8px 0;
  }

  .arrow { width: 8px; height: 5px; flex: none; }

  .v-track {
    flex: 1;
    align-self: stretch;
    padding: 146px 2px 0;
  }

  .v-thumb {
    height: 91px;
    background: #bbb;
  }

  .hscroll {
    height: 17px;
    flex: none;
    box-sizing: border-box;
    display: flex;
    align-items: center;
    background: #f2f2f2;
    padding: 0 13px 0 6px;
  }

  .h-arrow { width: 5px; height: 8px; flex: none; }

  .h-thumb {
    width: 1295px;
    height: 13px;
    box-sizing: border-box;
    margin-left: 6px;
    background: #bbb;
    border: 1px solid #aaa;
  }

  .h-arrow.right { margin-left: 23px; }

  /* status bar */
  .status-bar {
    height: 24px;
    flex: none;
    box-sizing: border-box;
    display: flex;
    align-items: center;
    padding-left: 15px;
    background: #ebe8d8;
    border-top: 1px solid #d8d6c8;
    color: #444;
  }

  .gift { width: 16px; height: 16px; }
  .today { margin-left: 3px; color: #555; }

  .status-right {
    margin-left: 800px;
    display: flex;
    align-items: center;
  }

  .st-live { margin-left: 3px; color: #666; }
  .st-news-ic { margin-left: 20px; }
  .st-news { margin-left: 3px; color: #18c050; font-weight: 700; }
  .st-med { margin-left: 17px; }
  .st-rocket { margin-left: 15px; }
  .st-speed { margin-left: 3px; }
  .st-down { margin-left: 14px; }
  .st-dl { margin-left: 3px; }
  .st-ie { margin-left: 16px; }
  .st-win { margin-left: 19px; }
  .st-vol { margin-left: 17px; }
  .st-zoom { margin-left: 14px; }
  .st-pct { margin-left: 3px; color: #3cb878; font: 13px "Noto Sans", sans-serif; }

  /* windows taskbar */
  .taskbar {
    height: 40px;
    flex: none;
    display: flex;
    background: #04131b;
    color: #fff;
  }

  .start {
    width: 48px;
    background: #000;
    display: flex;
    align-items: center;
    justify-content: center;
  }

  .start svg { width: 16px; height: 16px; }

  .cortana {
    width: 344px;
    background: #333;
    display: flex;
    align-items: center;
    padding-left: 9px;
    box-sizing: border-box;
    color: #999;
    font-size: 14px;
  }

  .ring-o {
    width: 15px;
    height: 15px;
    border: 3px solid #e8e8e8;
    border-radius: 50%;
    margin-right: 6px;
    flex: none;
  }

  .placeholder { width: 278px; white-space: nowrap; }
  .mic { width: 12px; height: 18px; }

  .apps {
    display: flex;
    width: 470px;
    padding-left: 2px;
    box-sizing: border-box;
  }

  .app {
    position: relative;
    width: 49px;
    display: flex;
    align-items: center;
    justify-content: center;
    flex: none;
  }

  .app svg { width: 24px; height: 24px; }

  .task-sep {
    width: 3px;
    height: 16px;
    border-left: 1px solid #444;
    border-right: 1px solid #444;
    align-self: center;
    margin: 0 11px 0 10px;
    box-sizing: border-box;
    flex: none;
  }

  .app.on::after,
  .app.active::after {
    content: "";
    position: absolute;
    left: 4px;
    right: 4px;
    bottom: 0;
    height: 2px;
    background: #76b9ed;
  }

  .app.active {
    background: #2f3538;
  }

  .app.active::after { left: 0; right: 0; }

  .tray {
    flex: 1;
    display: flex;
    align-items: center;
    min-width: 0;
  }

  .cpu {
    width: 50px;
    margin-left: 129px;
    display: flex;
    flex-direction: column;
    align-items: center;
    line-height: 18px;
    flex: none;
    white-space: nowrap;
    color: #eee;
  }

  .t-up { width: 14px; height: 8px; margin-left: 18px; flex: none; }
  .t-ic { width: 16px; height: 16px; margin-left: 8px; flex: none; }
  .t-kb { width: 24px; height: 16px; margin-left: 9px; flex: none; }
  .t-lang { font-size: 13px; margin-left: 9px; font-weight: 700; }

  .sogou {
    width: 15px;
    height: 15px;
    margin-left: 13px;
    background: #e8481c;
    color: #fff;
    font: 700 13px/15px "Liberation Sans", sans-serif;
    text-align: center;
    border-radius: 2px;
    flex: none;
  }

  .clock {
    width: 56px;
    margin-left: 19px;
    display: flex;
    flex-direction: column;
    align-items: center;
    line-height: 19px;
    font-size: 13px;
    white-space: nowrap;
    flex: none;
    color: #eee;
  }

  .notify {
    position: relative;
    width: 16px;
    height: 16px;
    margin-left: 22px;
    flex: none;
  }

  .notify svg { width: 16px; height: 16px; display: block; }

  .count {
    position: absolute;
    left: 7px;
    top: 6px;
    width: 16px;
    height: 16px;
    border-radius: 50%;
    background: #222;
    border: 1px solid #aaa;
    box-sizing: border-box;
    font: 700 11px/14px "Liberation Sans", sans-serif;
    text-align: center;
  }
</style>
